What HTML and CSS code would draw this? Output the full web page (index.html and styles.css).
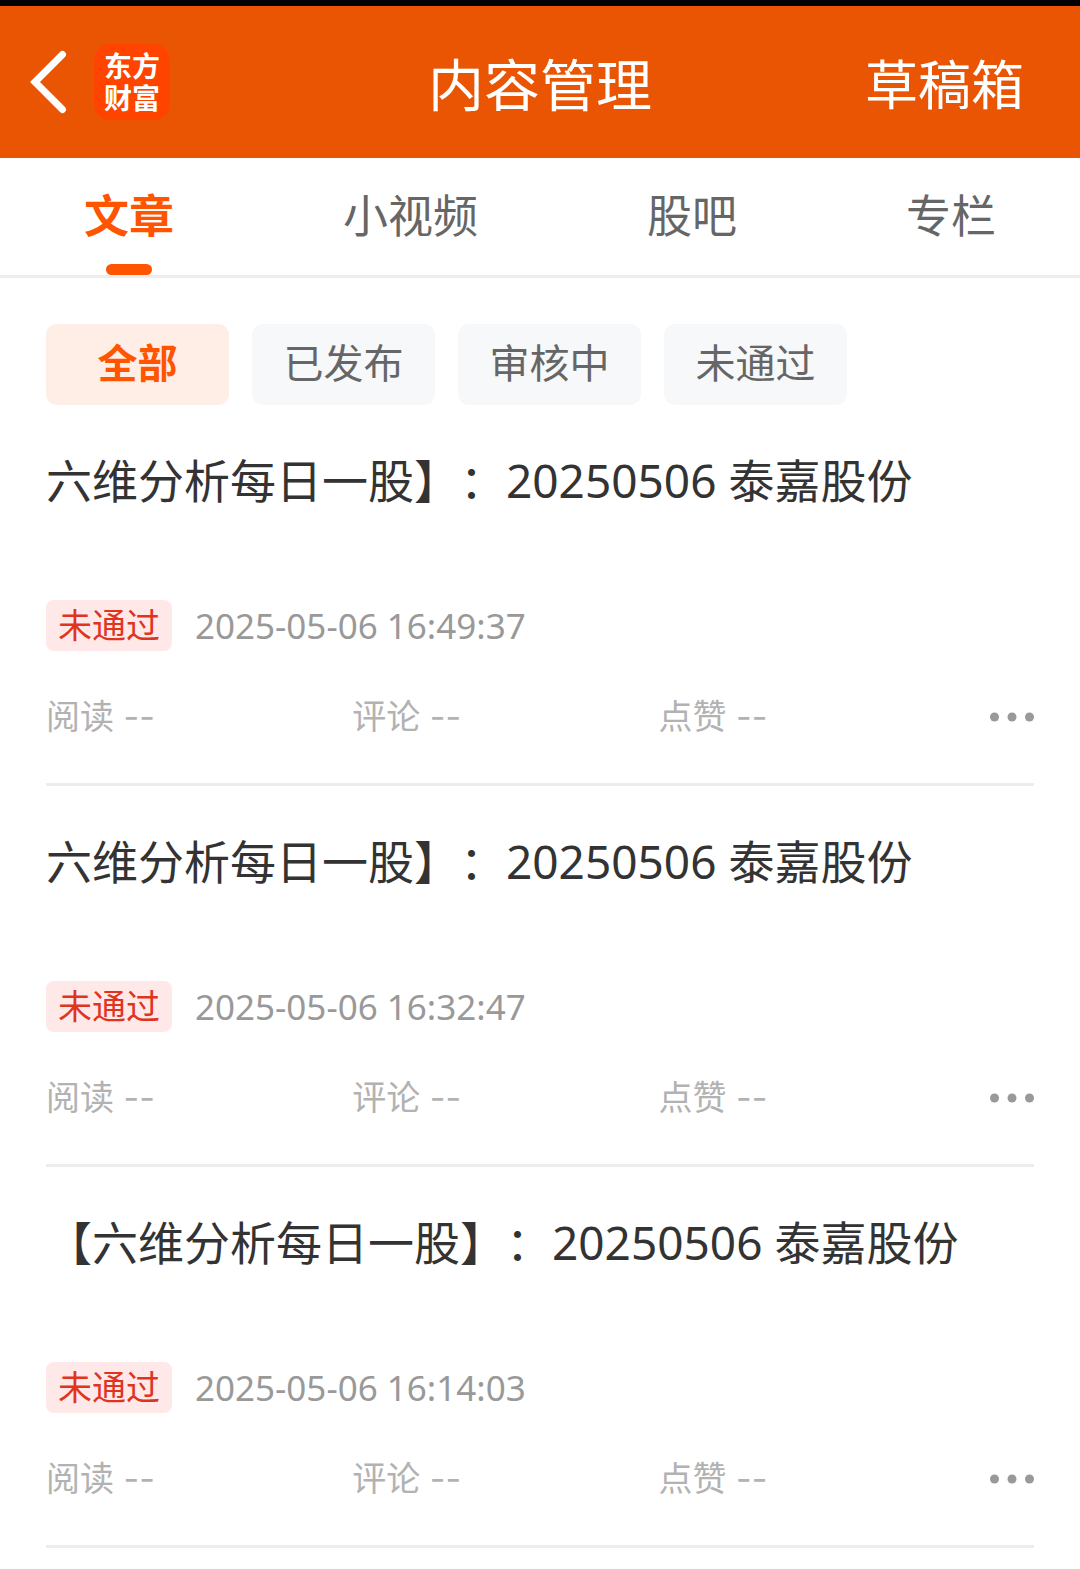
FILE: index.html
```
<!DOCTYPE html>
<html lang="zh-CN">
    <head>
        <meta charset="UTF-8" />
        <meta name="viewport" content="width=device-width, initial-scale=1.0" />
        <title>内容管理</title>
        <link rel="stylesheet" href="styles.css">
    </head>
    <body>
        <header class="header">
            <div class="header-left">
                <button class="back" type="button" aria-label="返回">
                    <svg width="40" height="64" viewBox="0 0 40 64" fill="none" stroke="#fff" stroke-width="7" stroke-linecap="round">
                        <path d="M34.5 4.5 L7 32 L34.5 59.5" />
                    </svg>
                </button>
                <div class="logo">东方财富</div>
            </div>
            <h1 class="header-title">内容管理</h1>
            <a class="drafts" href="#">草稿箱</a>
        </header>

        <nav class="tabs">
            <a class="tab active" href="#">文章</a>
            <a class="tab" href="#">小视频</a>
            <a class="tab" href="#">股吧</a>
            <a class="tab" href="#">专栏</a>
        </nav>

        <main class="content">
            <div class="filters">
                <button class="filter active" type="button">全部</button>
                <button class="filter" type="button">已发布</button>
                <button class="filter" type="button">审核中</button>
                <button class="filter" type="button">未通过</button>
            </div>

            <article class="post">
                <h2 class="post-title">六维分析每日一股】：20250506 泰嘉股份</h2>
                <div class="post-meta">
                    <span class="badge">未通过</span>
                    <time class="time">2025-05-06 16:49:37</time>
                </div>
                <div class="stats">
                    <span>阅读 --</span>
                    <span>评论 --</span>
                    <span>点赞 --</span>
                    <button class="more" type="button" aria-label="更多">
                        <svg width="44" height="10" viewBox="0 0 44 10" fill="#999">
                            <circle cx="4.5" cy="5" r="4.5" />
                            <circle cx="22" cy="5" r="4.5" />
                            <circle cx="39.5" cy="5" r="4.5" />
                        </svg>
                    </button>
                </div>
            </article>

            <article class="post">
                <h2 class="post-title">六维分析每日一股】：20250506 泰嘉股份</h2>
                <div class="post-meta">
                    <span class="badge">未通过</span>
                    <time class="time">2025-05-06 16:32:47</time>
                </div>
                <div class="stats">
                    <span>阅读 --</span>
                    <span>评论 --</span>
                    <span>点赞 --</span>
                    <button class="more" type="button" aria-label="更多">
                        <svg width="44" height="10" viewBox="0 0 44 10" fill="#999">
                            <circle cx="4.5" cy="5" r="4.5" />
                            <circle cx="22" cy="5" r="4.5" />
                            <circle cx="39.5" cy="5" r="4.5" />
                        </svg>
                    </button>
                </div>
            </article>

            <article class="post">
                <h2 class="post-title">【六维分析每日一股】：20250506 泰嘉股份</h2>
                <div class="post-meta">
                    <span class="badge">未通过</span>
                    <time class="time">2025-05-06 16:14:03</time>
                </div>
                <div class="stats">
                    <span>阅读 --</span>
                    <span>评论 --</span>
                    <span>点赞 --</span>
                    <button class="more" type="button" aria-label="更多">
                        <svg width="44" height="10" viewBox="0 0 44 10" fill="#999">
                            <circle cx="4.5" cy="5" r="4.5" />
                            <circle cx="22" cy="5" r="4.5" />
                            <circle cx="39.5" cy="5" r="4.5" />
                        </svg>
                    </button>
                </div>
            </article>
        </main>
    </body>
</html>
```

FILE: styles.css
```
:root {
    --brand: #ea5504;
    --accent: #ff5500;
    --line: #ededed;
    --side: 46px;
}

* {
    box-sizing: border-box;
}

body {
    margin: 0;
    background-color: #fff;
    color: #333;
    font-family: "Noto Sans", "Noto Sans CJK SC", sans-serif;
    text-spacing-trim: space-all;
}

button {
    padding: 0;
    border: 0;
    background: none;
    font-family: inherit;
    cursor: pointer;
}

a {
    color: inherit;
    text-decoration: none;
}

svg {
    display: block;
}

/* Header */
.header {
    display: grid;
    grid-template-columns: 1fr auto 1fr;
    align-items: center;
    height: 158px;
    padding: 0 56px 0 28px;
    border-top: 6px solid #000;
    background-color: var(--brand);
    color: #fff;
    font-family: "Noto Sans CJK SC", sans-serif;
}

.header-left {
    display: flex;
    align-items: center;
    gap: 26px;
}

.logo {
    width: 76px;
    height: 76px;
    padding: 5px 9px;
    border-radius: 16px;
    background-color: #ff4400;
    font-size: 28px;
    font-weight: 700;
    line-height: 32px;
    text-align: center;
}

.header-title {
    margin: 0 0 0 28px;
    font-size: 56px;
    font-weight: 400;
    line-height: 80px;
}

.drafts {
    justify-self: end;
    font-size: 53px;
    line-height: 80px;
}

/* Tabs */
.tabs {
    display: flex;
    justify-content: space-between;
    height: 120px;
    padding: 0 84px;
    border-bottom: 3px solid var(--line);
    color: #666;
    font-size: 45px;
    line-height: 116px;
}

.tab {
    position: relative;
}

.tab.active {
    color: var(--accent);
    font-weight: 700;
}

.tab.active::after {
    content: "";
    position: absolute;
    bottom: 0;
    left: 50%;
    width: 46px;
    height: 11px;
    border-radius: 6px;
    background-color: var(--accent);
    transform: translateX(-50%);
}

/* Filters */
.content {
    padding: 46px var(--side) 0;
}

.filters {
    display: flex;
    gap: 23px;
}

.filter {
    width: 183px;
    height: 81px;
    padding-bottom: 4px;
    border-radius: 11px;
    background-color: #f7f8fa;
    color: #666;
    font-size: 40px;
    line-height: 76px;
}

.filter.active {
    background-color: #ffeee6;
    color: var(--accent);
    font-weight: 700;
}

/* Posts */
.post {
    padding: 45px 0 41px;
    border-bottom: 3px solid var(--line);
}

.post-title {
    min-height: 120px;
    margin: 0 0 30px;
    font-size: 46px;
    font-weight: 400;
    line-height: 60px;
}

.post-meta {
    display: flex;
    align-items: center;
    gap: 23px;
    margin-bottom: 41px;
}

.badge {
    padding: 0 12px;
    border-radius: 8px;
    background-color: #ffe9e8;
    color: #e0341f;
    font-size: 34px;
    line-height: 51px;
}

.time {
    color: #999;
    font-size: 35px;
    line-height: 51px;
}

.stats {
    display: grid;
    grid-template-columns: repeat(3, 31%) 1fr;
    align-items: center;
    color: #b2b2b2;
    font-family: "Inter", "Noto Sans CJK SC", sans-serif;
    font-size: 34px;
    line-height: 50px;
}

.more {
    justify-self: end;
}
```
